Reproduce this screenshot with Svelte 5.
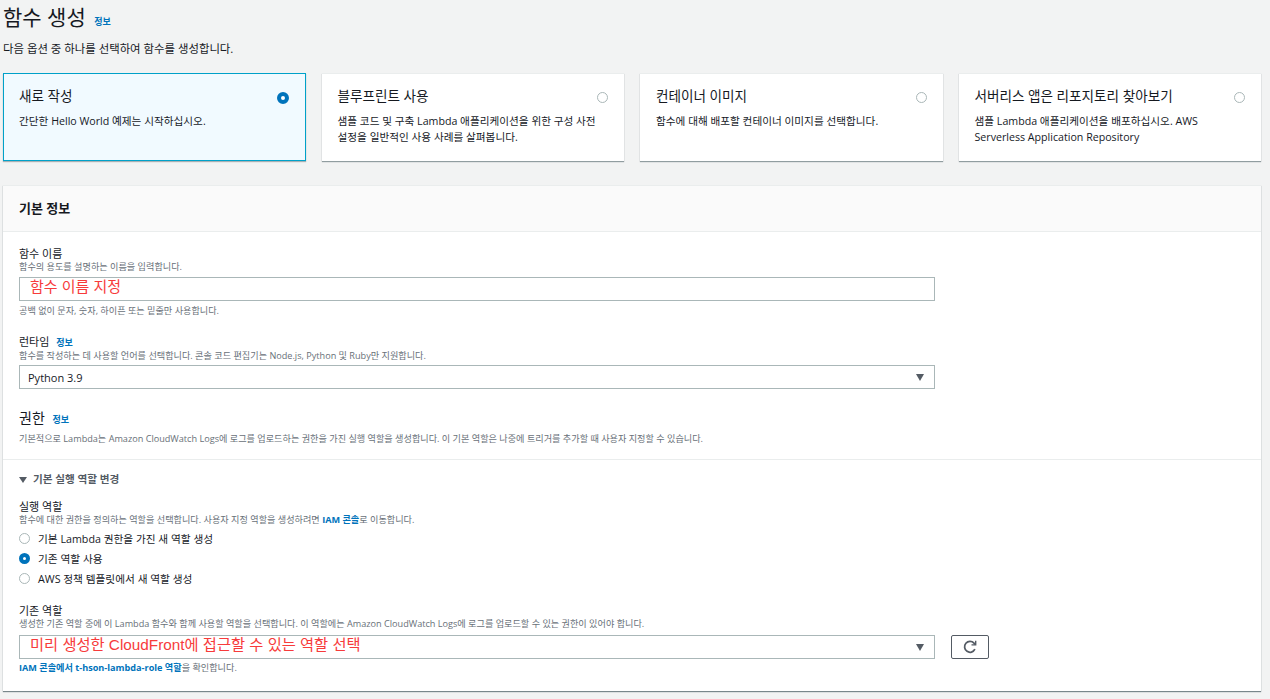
<script>
  const cards = [
    { title: '새로 작성', text: '간단한 Hello World 예제는 시작하십시오.', selected: true },
    { title: '블루프린트 사용', text: '샘플 코드 및 구축 Lambda 애플리케이션을 위한 구성 사전 설정을 일반적인 사용 사례를 살펴봅니다.' },
    { title: '컨테이너 이미지', text: '함수에 대해 배포할 컨테이너 이미지를 선택합니다.' },
    { title: '서버리스 앱은 리포지토리 찾아보기', text: '샘플 Lambda 애플리케이션을 배포하십시오. AWS Serverless Application Repository' }
  ];
  const roles = [
    { label: '기본 Lambda 권한을 가진 새 역할 생성' },
    { label: '기존 역할 사용', selected: true },
    { label: 'AWS 정책 템플릿에서 새 역할 생성' }
  ];
</script>

<div class="page">
  <h1>함수 생성 <a href="#info" class="info">정보</a></h1>
  <p class="lead">다음 옵션 중 하나를 선택하여 함수를 생성합니다.</p>

  <div class="cards">
    {#each cards as card}
      <div class="card" class:selected={card.selected}>
        <div class="card-text">
          <div class="card-title">{card.title}</div>
          <div class="card-desc">{card.text}</div>
        </div>
        <span class="radio" class:on={card.selected}></span>
      </div>
    {/each}
  </div>

  <section class="panel">
    <header>기본 정보</header>

    <div class="body">
      <div class="label">함수 이름</div>
      <div class="hint">함수의 용도를 설명하는 이름을 입력합니다.</div>
      <div class="input"><span class="note">함수 이름 지정</span></div>
      <div class="hint after">공백 없이 문자, 숫자, 하이픈 또는 밑줄만 사용합니다.</div>

      <div class="label runtime">런타임 <a href="#info" class="info">정보</a></div>
      <div class="hint">함수를 작성하는 데 사용할 언어를 선택합니다. 콘솔 코드 편집기는 Node.js, Python 및 Ruby만 지원합니다.</div>
      <div class="input select"><span class="value">Python 3.9</span><span class="caret"></span></div>

      <div class="perm">권한 <a href="#info" class="info">정보</a></div>
      <div class="hint perm-hint">기본적으로 Lambda는 Amazon CloudWatch Logs에 로그를 업로드하는 권한을 가진 실행 역할을 생성합니다. 이 기본 역할은 나중에 트리거를 추가할 때 사용자 지정할 수 있습니다.</div>
    </div>

    <div class="role">
      <div class="toggle"><span class="caret small"></span>기본 실행 역할 변경</div>

      <div class="label">실행 역할</div>
      <div class="hint">함수에 대한 권한을 정의하는 역할을 선택합니다. 사용자 지정 역할을 생성하려면 <a href="#iam" class="link">IAM 콘솔</a>로 이동합니다.</div>
      <div class="options">
        {#each roles as role}
          <div class="option"><span class="radio" class:on={role.selected}></span>{role.label}</div>
        {/each}
      </div>

      <div class="label existing">기존 역할</div>
      <div class="hint">생성한 기존 역할 중에 이 Lambda 함수와 함께 사용할 역할을 선택합니다. 이 역할에는 Amazon CloudWatch Logs에 로그를 업로드할 수 있는 권한이 있어야 합니다.</div>
      <div class="role-row">
        <div class="input select"><span class="note wide">미리 생성한 CloudFront에 접근할 수 있는 역할 선택</span><span class="caret"></span></div>
        <button aria-label="새로 고침">
          <svg width="14" height="14" viewBox="0 0 16 16" fill="none" stroke="#545b64" stroke-width="2">
            <path d="M13.6 10.5A6.2 6.2 0 1 1 12.6 3.6L14 5" />
            <path d="M14.5 .8V5.6H9.7" stroke-width="1.6" />
          </svg>
        </button>
      </div>
      <div class="hint view"><a href="#role" class="link">IAM 콘솔에서 t-hson-lambda-role 역할</a>을 확인합니다.</div>
    </div>
  </section>
</div>

<style>
  :global(body) {
    background: #f2f3f3;
  }
  .page {
    height: 699px;
    overflow: hidden;
    padding: 0 9px 0 3px;
    box-sizing: border-box;
    font-family: "Open Sans", "Noto Sans CJK KR", sans-serif;
    color: #16191f;
    font-size: 11px;
  }
  a {
    text-decoration: none;
  }
  .info {
    color: #0073bb;
    font-size: 9px;
    font-weight: 700;
    margin-left: 4px;
  }
  h1 {
    margin: 0;
    height: 41px;
    line-height: 35px;
    font-size: 21px;
    font-weight: 400;
  }
  h1 .info {
    margin-left: 3px;
  }
  .lead {
    margin: 0;
    height: 32px;
    line-height: 15px;
    font-size: 11.4px;
  }
  .cards {
    display: grid;
    grid-template-columns: repeat(4, 1fr);
    gap: 16px;
  }
  .card {
    height: 88px;
    box-sizing: border-box;
    background: #fff;
    border-top: 1px solid #eaeded;
    box-shadow: 0 1px 1px rgba(0, 28, 36, .4);
    padding: 12px 16px;
    display: flex;
    justify-content: space-between;
  }
  .card.selected {
    background: #f1faff;
    border: 1px solid #00a1c9;
    box-shadow: 0 1px 1px rgba(0, 28, 36, .3);
    padding: 12px 15px;
  }
  .card-title {
    font-size: 13.6px;
    line-height: 20px;
  }
  .card-desc {
    margin-top: 7px;
    font-size: 10.65px;
    line-height: 16px;
  }
  .radio {
    flex: none;
    width: 11px;
    height: 11px;
    margin-top: 6px;
    box-sizing: border-box;
    border: 1px solid #aab7b8;
    border-radius: 50%;
    background: #fff;
  }
  .radio.on {
    border: 4px solid #0073bb;
  }
  .selected .radio {
    width: 12px;
    height: 12px;
    margin-right: 1px;
  }
  .panel {
    margin-top: 24px;
    background: #fff;
    border-top: 1px solid #eaeded;
    box-shadow: 0 1px 1px rgba(0, 28, 36, .5);
    height: 506px;
    box-sizing: border-box;
  }
  header {
    height: 46px;
    line-height: 45px;
    padding-left: 16px;
    background: #fafafa;
    border-bottom: 1px solid #eaeded;
    font-size: 13px;
    font-weight: 700;
    box-sizing: border-box;
  }
  .body {
    padding: 14px 16px 0;
    height: 228px;
    box-sizing: border-box;
    border-bottom: 1px solid #eaeded;
  }
  .label {
    font-size: 11px;
    line-height: 15px;
  }
  .hint {
    font-size: 9.15px;
    line-height: 12px;
    color: #687078;
  }
  .input {
    width: 916px;
    height: 24px;
    box-sizing: border-box;
    border: 1px solid #aab7b8;
    margin-top: 4px;
    padding-left: 10px;
    display: flex;
    align-items: center;
    justify-content: space-between;
  }
  .after {
    margin-top: 4px;
  }
  .note {
    color: #f73b3b;
    font-size: 15px;
    font-family: "Liberation Sans", "Noto Sans CJK KR", sans-serif;
    line-height: 18px;
    margin-top: -4px;
  }
  .note.wide {
    font-size: 15.3px;
  }
  .runtime {
    margin-top: 17px;
  }
  .body .select {
    margin-top: 3px;
  }
  .value {
    font-size: 11px;
    margin-left: -2px;
  }
  .caret {
    width: 0;
    height: 0;
    margin-right: 10px;
    border-left: 4.5px solid transparent;
    border-right: 4.5px solid transparent;
    border-top: 7px solid #545b64;
  }
  .caret.small {
    display: inline-block;
    margin-right: 6px;
    border-left-width: 4px;
    border-right-width: 4px;
    border-top-width: 6px;
  }
  .perm {
    margin-top: 19px;
    font-size: 14px;
    line-height: 20px;
  }
  .perm-hint {
    margin-top: 3px;
  }
  .role {
    padding: 11px 16px 0;
  }
  .toggle {
    font-size: 10.6px;
    font-weight: 700;
    color: #545b64;
    line-height: 16px;
    margin-bottom: 12px;
  }
  .link {
    color: #0073bb;
    font-weight: 700;
  }
  .options {
    margin-top: 2px;
  }
  .option {
    display: flex;
    align-items: center;
    height: 20px;
    font-size: 10.7px;
  }
  .option .radio {
    width: 11px;
    height: 11px;
    margin: 0 8px 0 0;
  }
  .existing {
    margin-top: 15px;
  }
  .role-row {
    display: flex;
    gap: 16px;
    align-items: flex-start;
    margin-top: 1px;
  }
  button {
    margin-top: 4px;
    width: 38px;
    height: 24px;
    box-sizing: border-box;
    background: #fff;
    border: 1px solid #545b64;
    border-radius: 2px;
    padding: 0;
    display: flex;
    align-items: center;
    justify-content: center;
  }
  .view {
    margin-top: 3px;
  }
</style>
